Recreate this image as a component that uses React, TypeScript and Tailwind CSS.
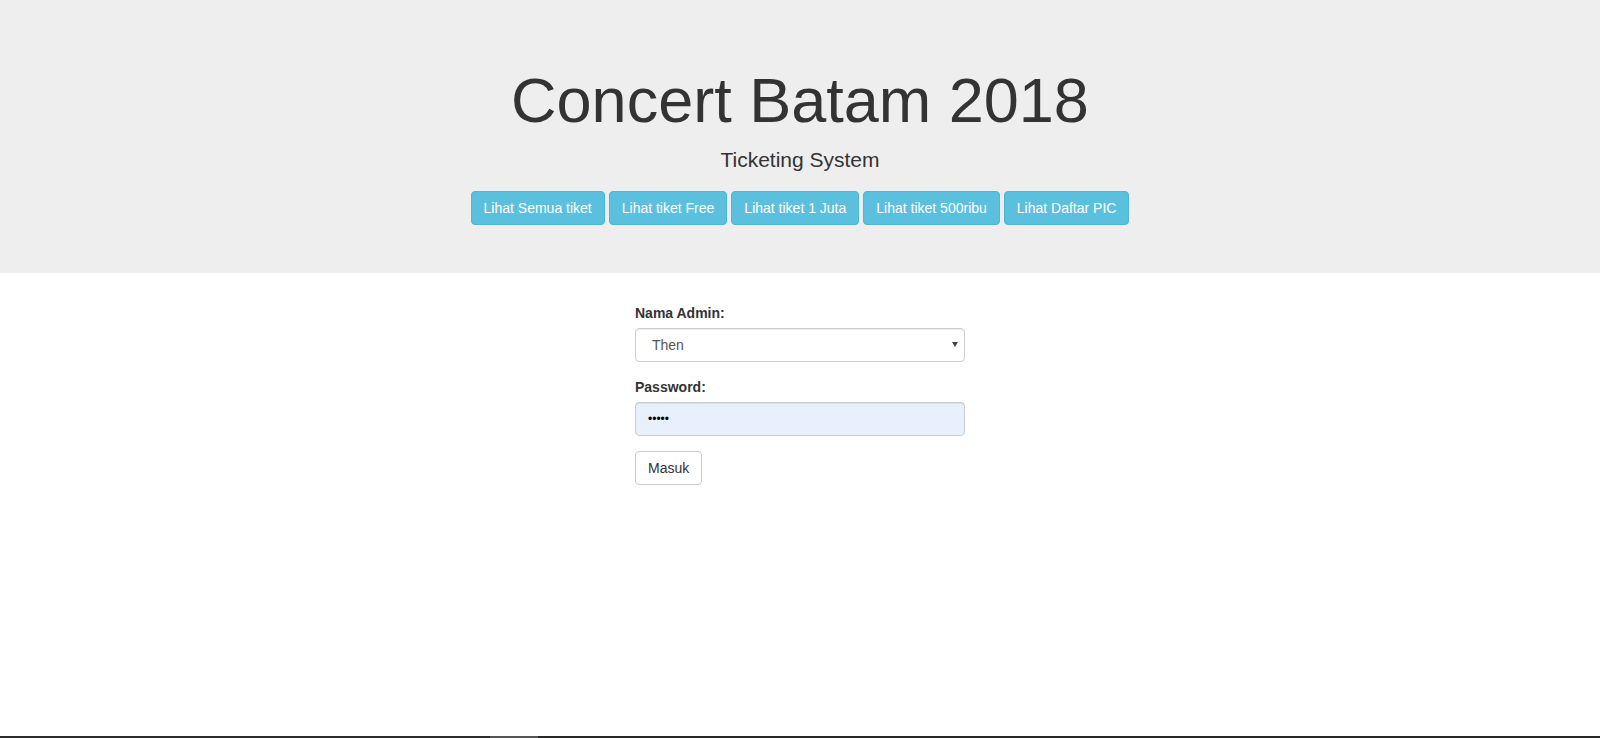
import React from "react";

const links = [
  "Lihat Semua tiket",
  "Lihat tiket Free",
  "Lihat tiket 1 Juta",
  "Lihat tiket 500ribu",
  "Lihat Daftar PIC",
];

const App: React.FC = () => (
  <div className="min-h-[738px] flex flex-col bg-white text-[#333] text-[14px] leading-[20px] font-['Liberation_Sans',Arial,sans-serif]">
    <div className="flex-1">
      {/* jumbotron */}
      <div className="bg-[#eeeeee] pt-[48px] pb-[48px] mb-[30px] text-center">
        <h1 className="mt-[18px] mb-[10px] text-[63px] leading-[69.3px] font-normal">
          Concert Batam 2018
        </h1>
        <p className="text-[21px] leading-[30px] mb-[16px]">Ticketing System</p>
        <div className="flex justify-center gap-[4px]">
          {links.map((l) => (
            <a
              key={l}
              href="#"
              className="h-[34px] px-[12px] py-[6px] border border-[#46b8da] bg-[#5bc0de] text-white rounded-[4px] text-[14px] leading-[20px]"
            >
              {l}
            </a>
          ))}
        </div>
      </div>

      {/* login form */}
      <form className="w-[330px] mx-auto">
        <div className="mb-[15px]">
          <label className="block font-bold mb-[5px]">Nama Admin:</label>
          <div className="relative">
            <select
              defaultValue="Then"
              className="appearance-none w-full h-[34px] pl-[16px] pr-[12px] border border-[#ccc] rounded-[4px] bg-white text-[#555] text-[14px] shadow-[inset_0_1px_1px_rgba(0,0,0,0.075)] outline-none"
            >
              <option>Then</option>
            </select>
            <svg
              className="absolute right-[7px] top-[14px] pointer-events-none"
              width="6"
              height="5"
              viewBox="0 0 6 5"
            >
              <path d="M0 0h6L3 5z" fill="#444" />
            </svg>
          </div>
        </div>
        <div className="mb-[15px]">
          <label className="block font-bold mb-[5px]">Password:</label>
          <input
            type="password"
            defaultValue="12345"
            className="w-full h-[34px] px-[12px] border border-[#ccc] rounded-[4px] bg-[#e8f0fe] text-black text-[12px] shadow-[inset_0_1px_1px_rgba(0,0,0,0.075)] outline-none"
          />
        </div>
        <button
          type="button"
          className="h-[34px] px-[12px] border border-[#ccc] rounded-[4px] bg-white text-[#333] text-[14px] leading-[20px]"
        >
          Masuk
        </button>
      </form>
    </div>

    {/* bottom strip */}
    <div className="flex h-[2px]">
      <div className="w-[490px] bg-[#2c2c2c]" />
      <div className="w-[48px] bg-[#555]" />
      <div className="flex-1 bg-[#282826]" />
    </div>
  </div>
);

export default App;
